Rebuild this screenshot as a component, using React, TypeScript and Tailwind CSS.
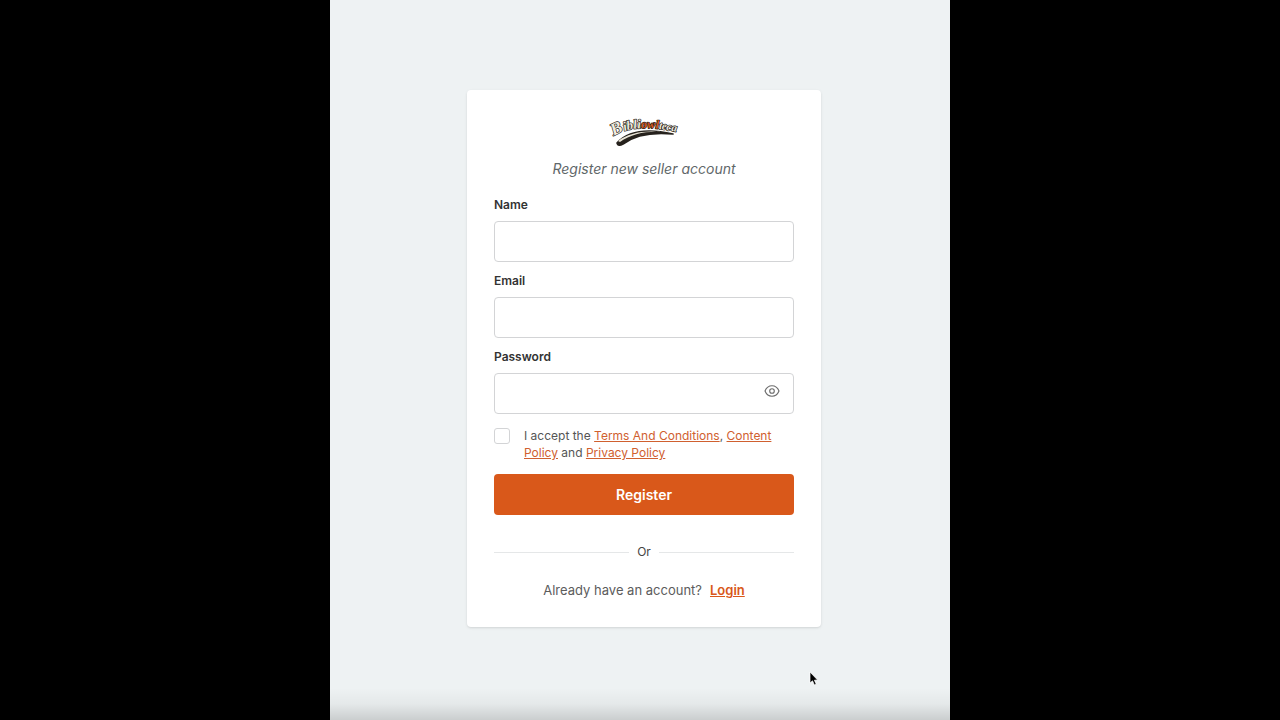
import { useState } from 'react';

const Logo = () => (
  <svg viewBox="0 0 68 36" className="h-9 w-[68px] overflow-visible" role="img" aria-label="Bibliowlteca">
    <defs>
      <path id="logo-arc" d="M4 25 Q24 11 72 22" />
    </defs>
    <path d="M7 32 C17 21 36 17 63 23 C42 21 25 24 13 33 Q8 36 7 32Z" fill="#26221d" stroke="#26221d" strokeWidth="1.6" strokeLinejoin="round" />
    <path d="M8 30 C18 22 34 19 52 21 C36 20 21 23 10 31Z" fill="#e9e4d6" />
    <text
      fontFamily="'Liberation Serif', serif"
      fontWeight="700"
      fontStyle="italic"
      fontSize="13"
      fill="#efeadd"
      stroke="#26221d"
      strokeWidth="1.4"
      strokeLinejoin="round"
      paintOrder="stroke"
    >
      <textPath href="#logo-arc">
        <tspan fontSize="17">B</tspan>
        <tspan>ibli</tspan>
        <tspan fill="#d9581a" fontSize="12">owl</tspan>
        <tspan fontSize="11">teca</tspan>
      </textPath>
    </text>
  </svg>
);

const EyeIcon = () => (
  <svg viewBox="0 0 16 16" className="size-4" fill="none" stroke="#6b6b6b" strokeWidth="1.1" aria-hidden="true">
    <path d="M1 8 C2.4 4.6 4.8 2.8 8 2.8 C11.2 2.8 13.6 4.6 15 8 C13.6 11.4 11.2 13.2 8 13.2 C4.8 13.2 2.4 11.4 1 8Z" strokeLinejoin="round" />
    <circle cx="8" cy="8" r="2.3" />
  </svg>
);

const Pointer = () => (
  <svg viewBox="0 0 12 16" className="pointer-events-none absolute right-[130px] bottom-[33px] h-4 w-3" aria-hidden="true">
    <path d="M2 1 L2 12 L4.5 9.8 L6.4 14 L8.2 13.2 L6.4 9.2 L9.6 9Z" fill="#000" stroke="#fff" strokeWidth="0.7" />
  </svg>
);

const inputClass =
  'block h-[41px] w-full rounded border border-[#d3d4d6] bg-white px-3 text-sm text-[#333] outline-none focus:border-[#d9581a]';
const labelClass = 'mb-1.5 block text-xs leading-5 font-semibold text-[#333]';
const linkClass = 'text-[#d0602f] underline underline-offset-1';

const App = () => {
  const [showPassword, setShowPassword] = useState(false);

  return (
    <div className="flex min-h-screen justify-center bg-black font-[Inter,sans-serif]">
      <main className="relative flex w-full max-w-[620px] flex-col items-center justify-center bg-[#eef2f3] pb-[3px] pl-2">
        <div className="absolute inset-x-0 bottom-0 h-8 bg-linear-to-b from-transparent via-black/4 to-black/15"></div>

        <div className="relative w-full max-w-[354px] rounded bg-white px-[27px] pt-[21px] pb-[27px] shadow-sm">
          <div className="flex justify-center">
            <Logo />
          </div>
          <h1 className="mt-3 text-center text-sm leading-5 text-[#5f6769] italic">Register new seller account</h1>

          <form className="mt-4" onSubmit={(e) => e.preventDefault()}>
            <div className="flex flex-col gap-[9px]">
              <div>
                <label htmlFor="name" className={labelClass}>Name</label>
                <input id="name" type="text" className={inputClass} />
              </div>
              <div>
                <label htmlFor="email" className={labelClass}>Email</label>
                <input id="email" type="email" className={inputClass} />
              </div>
              <div>
                <label htmlFor="password" className={labelClass}>Password</label>
                <div className="relative">
                  <input id="password" type={showPassword ? 'text' : 'password'} className={inputClass} />
                  <button
                    type="button"
                    aria-label="Show password"
                    onClick={() => setShowPassword(!showPassword)}
                    className="absolute top-2.5 right-3.5"
                  >
                    <EyeIcon />
                  </button>
                </div>
              </div>
            </div>

            <div className="mt-[13px] flex items-start gap-3.5">
              <input
                id="terms"
                type="checkbox"
                className="mt-px size-4 shrink-0 appearance-none rounded-[3px] border border-[#d3d4d6] bg-white checked:bg-[#d9581a]"
              />
              <label htmlFor="terms" className="text-xs leading-[17px] text-[#555]">
                I accept the <a href="#terms" className={linkClass}>Terms And Conditions</a>,{' '}
                <a href="#content" className={linkClass}>Content Policy</a> and{' '}
                <a href="#privacy" className={linkClass}>Privacy Policy</a>
              </label>
            </div>

            <button type="submit" className="mt-[13px] h-[41px] w-full rounded bg-[#d9581a] text-sm font-semibold text-white">
              Register
            </button>
          </form>

          <div className="mt-[27px] flex items-center gap-2 text-xs leading-5 text-[#444]">
            <span className="h-px flex-1 bg-[#e5e7e8]"></span>
            Or
            <span className="h-px flex-1 bg-[#e5e7e8]"></span>
          </div>

          <p className="mt-[18px] text-center text-[13px] leading-5 text-[#5c5c5c]">
            Already have an account?
            <a href="#login" className="ml-2 font-semibold text-[#d9581a] underline underline-offset-1">Login</a>
          </p>
        </div>

        <Pointer />
      </main>
    </div>
  );
};

export default App;
